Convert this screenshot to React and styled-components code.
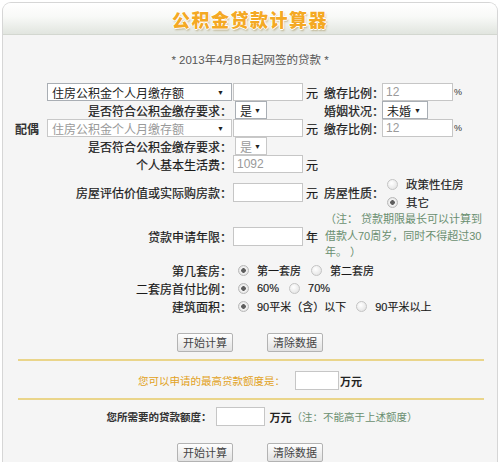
import React from "react";
import styled, { createGlobalStyle } from "styled-components";

const GlobalStyle = createGlobalStyle`
  body {
    margin: 0;
    background: #fff;
    font-family: "Liberation Sans", "Noto Sans CJK SC", sans-serif;
    font-size: 12px;
    color: #222;
  }
`;

const Panel = styled.div`
  box-sizing: border-box;
  width: 496px;
  margin: 2px 0 0 2px;
  border: 1px solid #d6d6d6;
  border-bottom: none;
  border-radius: 9px 9px 0 0;
  background: #f5f5f5;
  padding-bottom: 20px;
  overflow: hidden;
`;

const Header = styled.div`
  height: 31px;
  border-bottom: 1px solid #d3d7d0;
  background: linear-gradient(#ffffff 0%, #f8f9f7 45%, #e1e5df 100%);
  display: flex;
  align-items: center;
  justify-content: center;
`;

const Title = styled.h1`
  margin: 0;
  font-family: "Noto Sans CJK SC", sans-serif;
  font-size: 18px;
  font-weight: 900;
  letter-spacing: 1.5px;
  color: #f4a924;
  text-shadow: -1px 0 #fff, 1px 0 #fff, 0 -1px #fff, 0 1px #fff,
    1px 2px 2px rgba(120, 90, 0, 0.4);
`;

const Subtitle = styled.div`
  margin-top: 17px;
  text-align: center;
  line-height: 16px;
  font-size: 11.5px;
  color: #555;
`;

const Form = styled.div`
  display: grid;
  grid-template-columns: 230px 70px 21px 58px 1fr;
  grid-template-rows: repeat(5, 18px) 38px 50px repeat(3, 18px);
  align-items: center;
  margin-top: 15px;
`;

const Label = styled.div`
  grid-column: 1;
  display: flex;
  justify-content: flex-end;
  align-items: center;
  gap: 8px;
  padding-right: 1px;
  white-space: nowrap;
  font-size: 12px;
  color: #1a1a1a;
  -webkit-text-stroke: 0.2px #1a1a1a;
`;

const Mate = styled.span`
  font-weight: bold;
  color: #333;
  -webkit-text-stroke: 0;
`;

const RightLabel = styled.div`
  grid-column: 4;
  text-align: right;
  padding-right: ${(p) => p.$pad || 1}px;
  white-space: nowrap;
  font-size: 12px;
  color: #1a1a1a;
  -webkit-text-stroke: 0.2px #1a1a1a;
`;

const Cell = styled.div`
  display: flex;
  align-items: center;
  grid-column: ${(p) => p.$col || "auto"};
  -webkit-text-stroke: 0;
`;

const SelectBox = styled.span`
  position: relative;
  display: inline-flex;
  width: ${(p) => p.$w}px;
  height: 18px;
  margin-left: ${(p) => p.$ml || 0}px;
  -webkit-text-stroke: 0;
  &::after {
    content: "▼";
    position: absolute;
    right: ${(p) => p.$ar || 7}px;
    top: 50%;
    transform: translateY(-50%);
    font-size: 7px;
    color: #222;
    pointer-events: none;
  }
`;

const Select = styled.select`
  appearance: none;
  width: 100%;
  height: 100%;
  box-sizing: border-box;
  margin: 0;
  border: 1px solid #a9aeb4;
  border-radius: 0;
  background: #fff;
  padding: 0 0 0 4px;
  font-family: "Noto Sans CJK SC", sans-serif;
  font-size: 12px;
  color: #222;
  outline: none;
  &:disabled {
    color: #9a9a9a;
    border-color: #c8c8c8;
    opacity: 1;
  }
`;

const Field = styled.input`
  box-sizing: border-box;
  width: ${(p) => p.$w || 70}px;
  height: ${(p) => p.$h || 18}px;
  margin: 0;
  border: 1px solid #c6c6c6;
  background: #fff;
  padding: 0 3px;
  font-family: "Liberation Sans", sans-serif;
  font-size: 12px;
  color: #9a9a9a;
  outline: none;
`;

const Unit = styled.span`
  padding-left: 3px;
  font-size: 12px;
  color: #1a1a1a;
  -webkit-text-stroke: 0.2px #1a1a1a;
`;

const Percent = styled.span`
  padding-left: 1px;
  font-size: 9px;
  color: #333;
`;

const RadioStack = styled.div`
  grid-column: 5;
  display: flex;
  flex-direction: column;
  padding-top: 2px;
`;

const RadioLine = styled.label`
  display: flex;
  align-items: center;
  height: 18px;
  font-size: 11.5px;
  color: #1a1a1a;
  -webkit-text-stroke: 0.15px #1a1a1a;
`;

const Radio = styled.input.attrs({ type: "radio" })`
  appearance: none;
  box-sizing: border-box;
  width: 11px;
  height: 11px;
  margin: 0 ${(p) => p.$mr || 8}px 0 5px;
  border-radius: 50%;
  border: 1px solid #c4c4c4;
  background: radial-gradient(circle at 40% 35%, #ffffff, #dedede);
  &:checked {
    background: radial-gradient(circle, #5e5e5e 0 2px, #f4f4f4 2.6px, #d8d8d8 100%);
    border-color: #b8b8b8;
  }
`;

const Note = styled.div`
  grid-column: 4 / 6;
  padding-left: 1px;
  font-size: 11px;
  line-height: 16.5px;
  color: #6a8f70;
  white-space: nowrap;
`;

const Options = styled.div`
  grid-column: 2 / 6;
  display: flex;
  align-items: center;
`;

const OptionText = styled.span`
  margin-right: 5px;
  font-size: 11px;
  color: #1a1a1a;
  -webkit-text-stroke: 0.15px #1a1a1a;
`;

const ButtonRow = styled.div`
  display: flex;
  justify-content: center;
  gap: 34px;
  margin-top: ${(p) => p.$mt}px;
`;

const Btn = styled.button`
  box-sizing: border-box;
  width: 56px;
  height: 19px;
  padding: 0;
  border: 1px solid #b3b3b3;
  border-radius: 2px;
  background: linear-gradient(#fefefe, #e2e2e2);
  font-family: "Noto Sans CJK SC", sans-serif;
  font-size: 11px;
  line-height: 17px;
  color: #444;
  cursor: pointer;
`;

const Rule = styled.div`
  height: 2px;
  margin: ${(p) => p.$mt}px 13px 0 15px;
  background: #ead58a;
`;

const ResultRow = styled.div`
  display: flex;
  justify-content: center;
  align-items: center;
  margin-top: ${(p) => p.$mt}px;
  padding-left: ${(p) => p.$pl || 0}px;
`;

const ResultText = styled.span`
  margin-right: 10px;
  font-size: 10.5px;
  color: #e2a222;
`;

const AskText = styled.span`
  margin-right: 4px;
  font-size: 10.5px;
  font-weight: bold;
  color: #333;
`;

const Wan = styled.span`
  margin-left: ${(p) => p.$ml || 1}px;
  font-size: 11px;
  font-weight: bold;
  color: #222;
`;

const Hint = styled.span`
  font-size: 10.5px;
  color: #6a8f70;
`;

const PAY_OPTIONS = ["住房公积金个人月缴存额", "住房公积金个人月缴存额基数"];

export default function App() {
  return (
    <>
      <GlobalStyle />
      <Panel>
        <Header>
          <Title>公积金贷款计算器</Title>
        </Header>
        <Subtitle>* 2013年4月8日起网签的贷款 *</Subtitle>

        <Form>
          <Label>
            <SelectBox $w={185} $ar={8}>
              <Select defaultValue={PAY_OPTIONS[0]}>
                {PAY_OPTIONS.map((o) => (
                  <option key={o}>{o}</option>
                ))}
              </Select>
            </SelectBox>
          </Label>
          <Cell><Field /></Cell>
          <Unit>元</Unit>
          <RightLabel>缴存比例：</RightLabel>
          <Cell>
            <Field $w={71} defaultValue="12" />
            <Percent>%</Percent>
          </Cell>

          <Label>是否符合公积金缴存要求：</Label>
          <Cell>
            <SelectBox $w={32} $ml={2} $ar={6}>
              <Select><option>是</option><option>否</option></Select>
            </SelectBox>
          </Cell>
          <span />
          <RightLabel>婚姻状况：</RightLabel>
          <Cell>
            <SelectBox $w={46} $ar={7}>
              <Select><option>未婚</option><option>已婚</option></Select>
            </SelectBox>
          </Cell>

          <Label>
            <Mate>配偶</Mate>
            <SelectBox $w={185} $ar={8}>
              <Select disabled defaultValue={PAY_OPTIONS[0]}>
                {PAY_OPTIONS.map((o) => (
                  <option key={o}>{o}</option>
                ))}
              </Select>
            </SelectBox>
          </Label>
          <Cell><Field /></Cell>
          <Unit>元</Unit>
          <RightLabel>缴存比例：</RightLabel>
          <Cell>
            <Field $w={71} defaultValue="12" />
            <Percent>%</Percent>
          </Cell>

          <Label>是否符合公积金缴存要求：</Label>
          <Cell>
            <SelectBox $w={32} $ml={2} $ar={6}>
              <Select disabled><option>是</option><option>否</option></Select>
            </SelectBox>
          </Cell>

          <Label>个人基本生活费：</Label>
          <Cell><Field defaultValue="1092" /></Cell>
          <Unit>元</Unit>

          <Label>房屋评估价值或实际购房款：</Label>
          <Cell><Field $h={19} /></Cell>
          <Unit>元</Unit>
          <RightLabel $pad={6}>房屋性质：</RightLabel>
          <RadioStack>
            <RadioLine><Radio name="nature" />政策性住房</RadioLine>
            <RadioLine><Radio name="nature" defaultChecked />其它</RadioLine>
          </RadioStack>

          <Label>贷款申请年限：</Label>
          <Cell><Field $h={19} /></Cell>
          <Unit>年</Unit>
          <Note>
            （注：&nbsp;贷款期限最长可以计算到
            <br />
            借款人70周岁，同时不得超过30
            <br />
            年。&nbsp;）
          </Note>

          <Label>第几套房：</Label>
          <Options>
            <Radio name="suite" defaultChecked />
            <OptionText>第一套房</OptionText>
            <Radio name="suite" />
            <OptionText>第二套房</OptionText>
          </Options>

          <Label>二套房首付比例：</Label>
          <Options>
            <Radio name="ratio" defaultChecked />
            <OptionText>60%</OptionText>
            <Radio name="ratio" />
            <OptionText>70%</OptionText>
          </Options>

          <Label>建筑面积：</Label>
          <Options>
            <Radio name="area" defaultChecked />
            <OptionText>90平米（含）以下</OptionText>
            <Radio name="area" />
            <OptionText>90平米以上</OptionText>
          </Options>
        </Form>

        <ButtonRow $mt={18}>
          <Btn>开始计算</Btn>
          <Btn>清除数据</Btn>
        </ButtonRow>

        <Rule $mt={7} />
        <ResultRow $mt={10}>
          <ResultText>您可以申请的最高贷款额度是：</ResultText>
          <Field $w={44} $h={19} />
          <Wan>万元</Wan>
        </ResultRow>
        <Rule $mt={8} />

        <ResultRow $mt={7} $pl={24}>
          <AskText>您所需要的贷款额度：</AskText>
          <Field $w={49} $h={19} />
          <Wan $ml={5}>万元</Wan>
          <Hint>（注：不能高于上述额度）</Hint>
        </ResultRow>

        <ButtonRow $mt={17}>
          <Btn>开始计算</Btn>
          <Btn>清除数据</Btn>
        </ButtonRow>
      </Panel>
    </>
  );
}
